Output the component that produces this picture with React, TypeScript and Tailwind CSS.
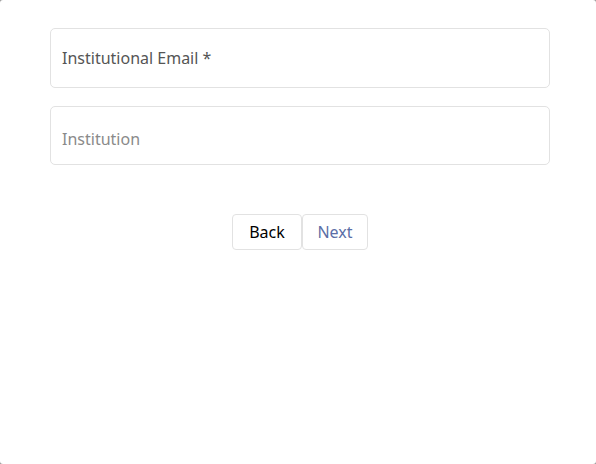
export default function App() {
  return (
    <div className="w-[596px] h-[464px] bg-[#9a9a9a]" style={{ fontFamily: "'Noto Sans', 'Open Sans', sans-serif" }}>
      <div className="w-full h-full bg-white rounded-[3px] pt-[28px]">
        {/* Fields */}
        <div className="w-[500px] ml-[50px] flex flex-col gap-[18px]">
          <div className="h-[60px] border border-[#e2e2e2] rounded-[5px] flex items-center px-[11px]">
            <span className="text-[16px] text-[#555555]">Institutional Email *</span>
          </div>
          <div className="h-[59px] border border-[#e2e2e2] rounded-[5px] flex items-center px-[11px] pt-[7px]">
            <span className="text-[16px] text-[#8a8a8a]">Institution</span>
          </div>
        </div>

        {/* Buttons */}
        <div className="w-[500px] ml-[50px] flex justify-center mt-[49px]">
          <button className="h-[36px] w-[70px] border border-[#e2e2e2] rounded-[4px] text-[16px] text-black bg-white">
            Back
          </button>
          <button className="h-[36px] w-[66px] border border-[#e2e2e2] rounded-[4px] text-[16px] text-[#5b6ea6] bg-white">
            Next
          </button>
        </div>
      </div>
    </div>
  );
}
